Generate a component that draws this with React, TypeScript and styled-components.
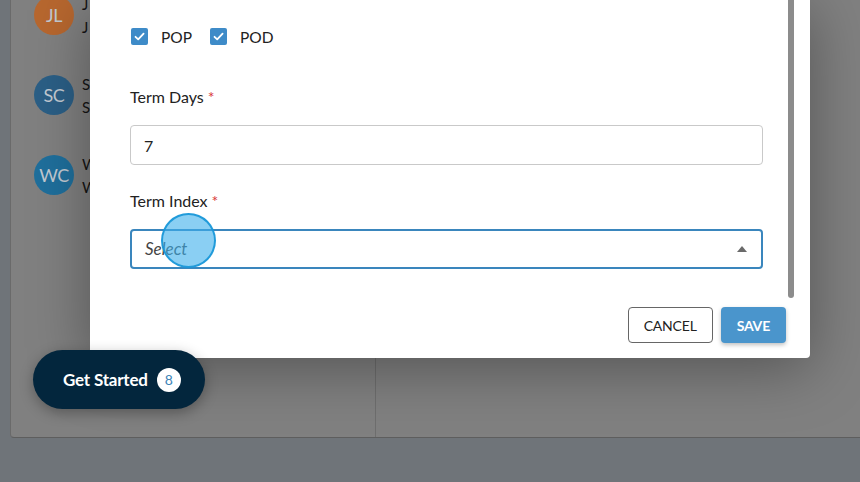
import React from "react";
import styled, { createGlobalStyle } from "styled-components";

const Global = createGlobalStyle`
  html, body { margin: 0; padding: 0; }
  body {
    width: 860px; height: 482px; overflow: hidden;
    background: #6f7479;
    font-family: Lato, "Open Sans", Arial, sans-serif;
  }
`;

const Page = styled.div`
  position: relative;
  width: 860px;
  height: 482px;
  overflow: hidden;
  background: #6f7479;
`;

const Card = styled.div`
  margin-left: 10px;
  width: 860px;
  height: 438px;
  background: #808080;
  border-left: 1px solid #6a6a6a;
  border-bottom: 1px solid #5e5e5e;
  border-radius: 0 0 0 4px;
  display: grid;
  grid-template-columns: 365px 1fr;
  box-sizing: border-box;
`;

const LeftPane = styled.div`
  border-right: 1px solid #6e6e6e;
  padding: 0 0 0 23px;
  display: flex;
  flex-direction: column;
  gap: 40px;
  margin-top: -5px;
`;

const RightPane = styled.div``;

const Contact = styled.div`
  display: flex;
  align-items: center;
  gap: 8px;
  height: 40px;
`;

const Avatar = styled.div<{ $bg: string }>`
  width: 40px;
  height: 40px;
  border-radius: 50%;
  background: ${(p) => p.$bg};
  color: #c2cad2;
  font-size: 18px;
  display: flex;
  align-items: center;
  justify-content: center;
  letter-spacing: -0.5px;
  flex-shrink: 0;
`;

const ContactText = styled.div`
  display: flex;
  flex-direction: column;
  gap: 5px;
  font-size: 15px;
  color: #141414;
  line-height: 18px;
`;

const Modal = styled.div`
  position: absolute;
  left: 90px;
  top: 0;
  width: 720px;
  height: 358px;
  background: #fff;
  border-radius: 0 0 4px 4px;
  box-shadow: 0 10px 60px rgba(0, 0, 0, 0.35);
  display: flex;
  flex-direction: column;
`;

const Body = styled.div`
  flex: 1;
  display: flex;
  padding-right: 16px;
  min-height: 0;
`;

const Form = styled.div`
  flex: 1;
  padding: 28px 25px 0 40px;
  display: flex;
  flex-direction: column;
`;

const ScrollThumb = styled.div`
  width: 6px;
  height: 298px;
  background: #8c8c8c;
  border-radius: 0 0 3px 3px;
`;

const CheckRow = styled.div`
  display: flex;
  align-items: center;
  gap: 17px;
  height: 17px;
  margin-bottom: 43px;
`;

const CheckItem = styled.label`
  display: flex;
  align-items: center;
  gap: 13px;
  font-size: 15.5px;
  color: #222;
  padding-left: 1px;
`;

const Box = styled.span`
  width: 17px;
  height: 17px;
  border-radius: 2px;
  background: #3e8bc8;
  display: flex;
  align-items: center;
  justify-content: center;
`;

const Label = styled.div`
  font-size: 16px;
  color: #222;
  line-height: 18px;
  margin-bottom: 19px;
`;

const Req = styled.span`
  color: #d9383a;
  margin-left: 4px;
`;

const Field = styled.div<{ $focus?: boolean }>`
  position: relative;
  height: 40px;
  box-sizing: border-box;
  border: ${(p) => (p.$focus ? "2px solid #3a86bd" : "1px solid #c9c9c9")};
  border-radius: 4px;
  display: flex;
  align-items: center;
  padding: 0 13px;
  font-size: 16px;
  color: #222;
  margin-bottom: 27px;
`;

const Placeholder = styled.span`
  font-style: italic;
  font-size: 17px;
  color: #444;
  flex: 1;
  margin-top: -2px;
`;

const Caret = styled.span`
  width: 0;
  height: 0;
  border-left: 5px solid transparent;
  border-right: 5px solid transparent;
  border-bottom: 6px solid #6a6a6a;
  margin-right: 1px;
`;

const Cursor = styled.span`
  position: absolute;
  left: 29px;
  top: -18px;
  width: 51px;
  height: 51px;
  border-radius: 50%;
  background: rgba(60, 175, 235, 0.6);
  border: 2px solid rgba(22, 150, 215, 0.9);
`;

const Footer = styled.div`
  display: flex;
  justify-content: flex-end;
  gap: 8px;
  padding: 8px 24px 15px 0;
`;

const Button = styled.button<{ $primary?: boolean }>`
  height: 36px;
  box-sizing: border-box;
  padding: 0 ${(p) => (p.$primary ? "16px" : "15px")};
  border-radius: 4px;
  font-family: Lato, Arial, sans-serif;
  font-size: 14px;
  font-weight: ${(p) => (p.$primary ? 700 : 400)};
  letter-spacing: -0.2px;
  border: ${(p) => (p.$primary ? "none" : "1px solid #666")};
  background: ${(p) => (p.$primary ? "#4a95cc" : "#fff")};
  color: ${(p) => (p.$primary ? "#fff" : "#222")};
  box-shadow: ${(p) => (p.$primary ? "0 2px 4px rgba(0,0,0,0.25)" : "none")};
`;

const Pill = styled.div`
  position: absolute;
  left: 33px;
  top: 350px;
  width: 172px;
  height: 59px;
  box-sizing: border-box;
  padding-left: 30px;
  border-radius: 30px;
  background: #03263d;
  box-shadow: 0 4px 14px rgba(0, 0, 0, 0.3);
  display: flex;
  align-items: center;
  gap: 9px;
  color: #fff;
  font-size: 17px;
  font-weight: 700;
  letter-spacing: -0.2px;
`;

const Badge = styled.span`
  width: 24px;
  height: 24px;
  border-radius: 50%;
  background: #fff;
  color: #3d85b8;
  font-size: 14px;
  font-weight: 400;
  display: flex;
  align-items: center;
  justify-content: center;
`;

const Check = () => (
  <svg width="13" height="13" viewBox="0 0 13 13">
    <path d="M2.5 6.8 L5.2 9.4 L10.6 3.6" fill="none" stroke="#fff" strokeWidth="1.8" strokeLinecap="round" strokeLinejoin="round" />
  </svg>
);

const contacts = [
  { initials: "JL", bg: "#b7672f", a: "J", b: "J" },
  { initials: "SC", bg: "#2b5f86", a: "S", b: "S" },
  { initials: "WC", bg: "#1f6f9c", a: "W", b: "W" },
];

export default function App() {
  return (
    <Page>
      <Global />
      <Card>
        <LeftPane>
          {contacts.map((c) => (
            <Contact key={c.initials}>
              <Avatar $bg={c.bg}>{c.initials}</Avatar>
              <ContactText>
                <span>{c.a}</span>
                <span>{c.b}</span>
              </ContactText>
            </Contact>
          ))}
        </LeftPane>
        <RightPane />
      </Card>

      <Modal>
        <Body>
          <Form>
            <CheckRow>
              <CheckItem>
                <Box><Check /></Box>POP
              </CheckItem>
              <CheckItem>
                <Box><Check /></Box>POD
              </CheckItem>
            </CheckRow>
            <Label>Term Days<Req>*</Req></Label>
            <Field>7</Field>
            <Label>Term Index<Req>*</Req></Label>
            <Field $focus>
              <Placeholder>Select</Placeholder>
              <Caret />
              <Cursor />
            </Field>
          </Form>
          <ScrollThumb />
        </Body>
        <Footer>
          <Button>CANCEL</Button>
          <Button $primary>SAVE</Button>
        </Footer>
      </Modal>

      <Pill>
        Get Started
        <Badge>8</Badge>
      </Pill>
    </Page>
  );
}
